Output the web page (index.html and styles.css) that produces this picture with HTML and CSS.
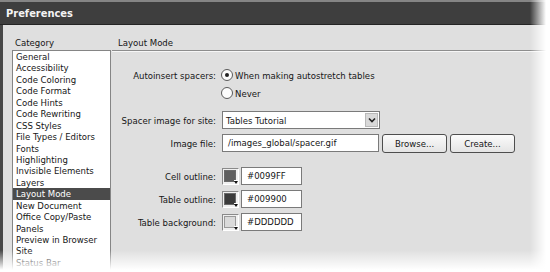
FILE: index.html
```html
<!DOCTYPE html>
<html lang="en">
<head>
    <meta charset="UTF-8">
    <title>Preferences</title>
    <link rel="stylesheet" href="styles.css">
</head>
<body>
    <div class="dialog">
        <div class="titlebar">Preferences</div>
        <div class="content">
            <div class="category">
                <div class="heading">Category</div>
                <ul class="cat-list">
                    <li>General</li>
                    <li>Accessibility</li>
                    <li>Code Coloring</li>
                    <li>Code Format</li>
                    <li>Code Hints</li>
                    <li>Code Rewriting</li>
                    <li>CSS Styles</li>
                    <li>File Types / Editors</li>
                    <li>Fonts</li>
                    <li>Highlighting</li>
                    <li>Invisible Elements</li>
                    <li>Layers</li>
                    <li class="selected">Layout Mode</li>
                    <li>New Document</li>
                    <li>Office Copy/Paste</li>
                    <li>Panels</li>
                    <li>Preview in Browser</li>
                    <li>Site</li>
                    <li>Status Bar</li>
                </ul>
            </div>
            <div class="panel">
                <div class="heading panel-title">Layout Mode</div>
                <div class="panel-body">
                    <div class="row">
                        <span class="label">Autoinsert spacers:</span>
                        <span class="radio checked"></span>
                        <span class="radio-text">When making autostretch tables</span>
                    </div>
                    <div class="row">
                        <span class="label"></span>
                        <span class="radio"></span>
                        <span class="radio-text">Never</span>
                    </div>
                    <div class="row row-select">
                        <span class="label">Spacer image for site:</span>
                        <div class="select">
                            <span class="select-text">Tables Tutorial</span>
                            <span class="select-btn">
                                <svg width="8" height="6" viewBox="0 0 8 6"><polyline points="1,1.5 4,4.5 7,1.5" fill="none" stroke="#222" stroke-width="1.6"/></svg>
                            </span>
                        </div>
                    </div>
                    <div class="row row-file">
                        <span class="label">Image file:</span>
                        <div class="field file-field">/images_global/spacer.gif</div>
                        <div class="button">Browse...</div>
                        <div class="button">Create...</div>
                    </div>
                    <div class="row row-color first-color">
                        <span class="label">Cell outline:</span>
                        <span class="swatch"><span class="swatch-fill fill-cell"></span></span>
                        <div class="field hex-field">#0099FF</div>
                    </div>
                    <div class="row row-color">
                        <span class="label">Table outline:</span>
                        <span class="swatch"><span class="swatch-fill fill-table"></span></span>
                        <div class="field hex-field">#009900</div>
                    </div>
                    <div class="row row-color">
                        <span class="label">Table background:</span>
                        <span class="swatch"><span class="swatch-fill fill-bg"></span></span>
                        <div class="field hex-field">#DDDDDD</div>
                    </div>
                </div>
            </div>
        </div>
        <div class="fade-right"></div>
        <div class="fade-bottom"></div>
    </div>
</body>
</html>
```

FILE: styles.css
```css
body {
    margin: 0;
    padding: 0;
    background-color: #fff;
    font-family: "DejaVu Sans Condensed", "DejaVu Sans", sans-serif;
    font-stretch: condensed;
    font-size: 9.5px;
    color: #161616;
}
.dialog {
    position: relative;
    width: 550px;
    height: 272px;
    overflow: hidden;
    background-color: #dfdfdf;
}
.titlebar {
    height: 22px;
    border-top: 2px solid #858585;
    border-bottom: 1px solid #242424;
    background-color: #3e3e3e;
    color: #f4f4f4;
    font-weight: bold;
    font-size: 11px;
    line-height: 23px;
    padding-left: 6px;
}
.content {
    display: flex;
    height: 247px;
    border-left: 3px solid #474747;
    padding-top: 10px;
    box-sizing: border-box;
}
.category {
    width: 99px;
    margin-left: 9px;
    display: flex;
    flex-direction: column;
}
.heading {
    height: 15px;
    line-height: 15px;
    padding-left: 3px;
}
.cat-list {
    flex: 1;
    margin: 0;
    padding: 0;
    list-style: none;
    background-color: #fff;
    border: 1px solid #858585;
    overflow: hidden;
}
.cat-list li {
    height: 11.44px;
    line-height: 11.44px;
    padding-left: 3px;
    white-space: nowrap;
}
.cat-list li.selected {
    background-color: #4b4b4b;
    color: #fff;
}
.panel {
    flex: 1;
    margin-left: 1px;
}
.panel-title {
    padding-left: 6px;
    border-bottom: 1px solid #8d8d8d;
    box-shadow: 0 1px 0 #f6f6f6;
}
.panel-body {
    padding-top: 15px;
}
.row {
    display: flex;
    align-items: center;
    height: 18px;
}
.label {
    width: 104px;
    margin-right: 5px;
    text-align: right;
    white-space: nowrap;
}
.radio {
    width: 10px;
    height: 10px;
    border: 1px solid #5a5a5a;
    border-radius: 50%;
    background-color: #fbfbfb;
    display: flex;
    align-items: center;
    justify-content: center;
    margin-right: 2px;
}
.radio.checked::after {
    content: "";
    width: 4px;
    height: 4px;
    border-radius: 50%;
    background-color: #222;
}
.row-select {
    margin-top: 9px;
}
.select {
    width: 158px;
    height: 18px;
    box-sizing: border-box;
    border: 1px solid #7a7a7a;
    background-color: #fff;
    display: flex;
    align-items: center;
    margin-left: 1px;
}
.select-text {
    flex: 1;
    padding-left: 3px;
}
.select-btn {
    width: 13px;
    height: 14px;
    margin-right: 1px;
    background-color: #d9d9d9;
    border: 1px solid #b9b9b9;
    box-sizing: border-box;
    display: flex;
    align-items: center;
    justify-content: center;
}
.row-file {
    margin-top: 5px;
}
.field {
    height: 18px;
    box-sizing: border-box;
    border: 1px solid #7a7a7a;
    background-color: #fff;
    line-height: 16px;
    white-space: nowrap;
}
.file-field {
    width: 157px;
    margin-left: 1px;
    padding-left: 5px;
}
.button {
    width: 65px;
    height: 19px;
    box-sizing: border-box;
    margin-left: 3px;
    border: 1px solid #4e4e4e;
    border-radius: 3px;
    background: linear-gradient(#fbfbfb, #e4e4e4);
    text-align: center;
    line-height: 17px;
}
.row-color {
    margin-top: 5px;
}
.row-color.first-color {
    margin-top: 15px;
}
.swatch {
    position: relative;
    width: 17px;
    height: 17px;
    box-sizing: border-box;
    margin-left: 1px;
    border: 1px solid #8a8a8a;
    border-right-color: #fff;
    border-bottom-color: #fff;
    background-color: #f0f0f0;
    padding: 1px 2px 2px 1px;
}
.swatch-fill {
    display: block;
    width: 100%;
    height: 100%;
    box-sizing: border-box;
    border: 1px solid #6a6a6a;
}
.fill-cell {
    background-color: #5f5f5f;
}
.fill-table {
    background-color: #3c3c3c;
}
.fill-bg {
    background-color: #dadada;
    border-color: #9a9a9a;
}
.swatch::after {
    content: "";
    position: absolute;
    right: 0;
    bottom: 0;
    width: 0;
    height: 0;
    border-left: 2.5px solid transparent;
    border-right: 2.5px solid transparent;
    border-top: 3px solid #111;
    box-shadow: 0 -1px 0 #fff;
}
.hex-field {
    width: 61px;
    margin-left: 2px;
    padding-left: 5px;
}
.fade-right {
    position: absolute;
    top: 0;
    right: 0;
    width: 20px;
    height: 100%;
    background: linear-gradient(to right, rgba(255, 255, 255, 0), #fff 80%);
}
.fade-bottom {
    position: absolute;
    left: 0;
    bottom: 0;
    width: 100%;
    height: 22px;
    background: linear-gradient(rgba(255, 255, 255, 0), #fff 90%);
}
```
